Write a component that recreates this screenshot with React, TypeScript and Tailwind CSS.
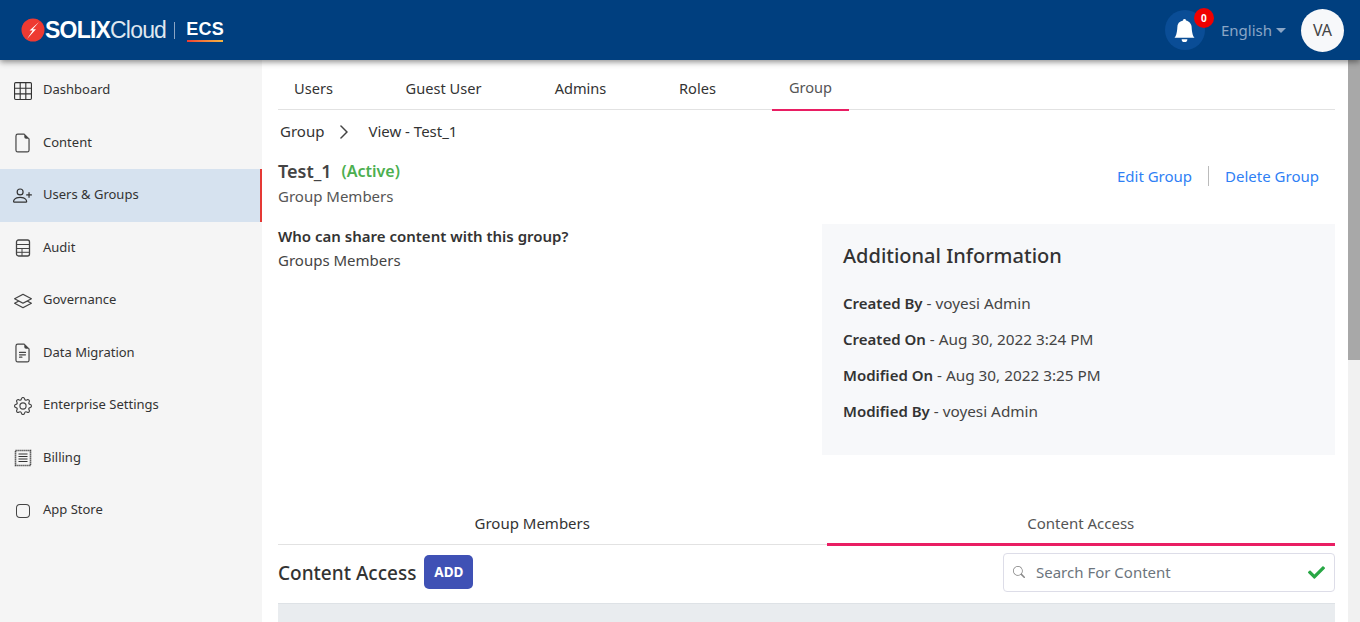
import { BsBellFill, BsChevronRight, BsSearch, BsFileEarmark, BsFileEarmarkText, BsGear, BsLayers, BsPersonPlus, BsGrid3X3, BsApp } from "react-icons/bs";
import { FaCheck } from "react-icons/fa";

const font = "font-['Noto_Sans',sans-serif]";

function AuditIcon() {
  return (
    <svg width="18" height="18" viewBox="0 0 18 18" fill="none" stroke="#444" strokeWidth="1">
      <rect x="2.5" y="1" width="13" height="16" rx="2" strokeWidth="1.3" />
      <path d="M2.5 5.5h13M2.5 9.5h13M2.5 13.3h13M8 9.5V17" />
    </svg>
  );
}

function BillingIcon() {
  return (
    <svg width="18" height="18" viewBox="0 0 18 18" fill="none" stroke="#333">
      <rect x="1.5" y="1.5" width="15" height="15" strokeWidth="1.6" strokeDasharray="1.2 0.8" />
      <path d="M4.5 5h9M4.5 7.5h9M4.5 10h9M4.5 12.5h9" strokeWidth="1.2" />
    </svg>
  );
}

const navItems = [
  { label: "Dashboard", icon: <BsGrid3X3 size={18} color="#333" /> },
  { label: "Content", icon: <BsFileEarmark size={20} color="#444" /> },
  { label: "Users & Groups", icon: <BsPersonPlus size={19} color="#333" />, active: true },
  { label: "Audit", icon: <AuditIcon /> },
  { label: "Governance", icon: <BsLayers size={18} color="#444" /> },
  { label: "Data Migration", icon: <BsFileEarmarkText size={20} color="#444" /> },
  { label: "Enterprise Settings", icon: <BsGear size={18} color="#444" /> },
  { label: "Billing", icon: <BillingIcon /> },
  { label: "App Store", icon: <BsApp size={16} color="#444" /> },
];

const tabs = [
  { label: "Users", w: "w-[71px]" },
  { label: "Guest User", w: "w-[109px]" },
  { label: "Admins", w: "w-[85px]" },
  { label: "Roles", w: "w-[69px]" },
  { label: "Group", w: "w-[77px]", active: true },
];

function Header() {
  return (
    <header className="relative z-10 flex h-[60px] shrink-0 items-center justify-between bg-[#003f7f] pl-[21px] pr-4 shadow-[0_2px_6px_rgba(0,0,0,0.45)]">
      <div className="flex items-center">
        <svg width="24" height="24" viewBox="0 0 24 24">
          <circle cx="12" cy="12" r="11.5" fill="#ee3a32" />
          <path d="M18 4 8.5 12.5h3.2L6 21l9-9.8h-3.2z" fill="#fff" />
        </svg>
        <span className="font-['Liberation_Sans',sans-serif] text-[23px] font-bold tracking-[-0.8px] text-white">SOLIX</span>
        <span className="font-['Liberation_Sans',sans-serif] text-[23px] tracking-[-0.8px] text-[#dfe7f0]">Cloud</span>
        <div className="mr-[11px] ml-[8px] h-[17px] w-px bg-[#8aa5c4]" />
        <div className="flex flex-col items-center">
          <span className="font-['Liberation_Sans',sans-serif] text-[18px] leading-[22px] font-bold tracking-[0.3px] text-white">ECS</span>
          <div className="h-[2px] w-9 bg-gradient-to-r from-[#ee3a32] to-[#f5b642]" />
        </div>
      </div>
      <div className="flex items-center">
        <div className="relative flex h-10 w-10 items-center justify-center rounded-full bg-[#0a4d96]">
          <BsBellFill size={23} color="#fff" />
          <span className="absolute -top-[2px] left-[29px] flex h-5 w-5 items-center justify-center rounded-full bg-[#f00000] text-[10px] font-bold text-white">0</span>
        </div>
        <span className="ml-[16px] text-[15px] text-[#8ba6c6]">English</span>
        <span className="mt-[1px] ml-[4px] h-0 w-0 border-x-[5px] border-t-[5px] border-x-transparent border-t-[#8ba6c6]" />
        <div className="ml-[15px] flex h-[43px] w-[43px] items-center justify-center rounded-full bg-[#f7f8fa] text-[16px] text-[#444]">VA</div>
      </div>
    </header>
  );
}

function Sidebar() {
  return (
    <aside className="flex w-[262px] shrink-0 flex-col bg-[#f5f5f5] pt-[4.4px]">
      {navItems.map((item) => (
        <div
          key={item.label}
          className={`flex h-[52.5px] items-center gap-[11px] pl-[13px] text-[13px] text-[#333] ${item.active ? "border-r-2 border-[#e53935] bg-[#d6e2ef]" : ""}`}
        >
          <span className="flex w-[19px] justify-center">{item.icon}</span>
          <span className="-mt-[1px]">{item.label}</span>
        </div>
      ))}
    </aside>
  );
}

function TopTabs() {
  return (
    <div className="flex h-[50px] gap-10 border-b border-[#e2e2e2]">
      {tabs.map((t) => (
        <div
          key={t.label}
          className={`${t.w} ${t.active ? "border-b-[2px] border-[#e91e63] text-[#555]" : "text-[#333]"} flex h-[51px] items-center justify-center pt-[6px] text-[14.6px]`}
        >
          {t.label}
        </div>
      ))}
    </div>
  );
}

function InfoRow({ label, value }: { label: string; value: string }) {
  return (
    <p className="text-[15.3px] leading-[20px] text-[#444]">
      <span className="text-[15px] font-semibold text-[#333]">{label}</span> - {value}
    </p>
  );
}

export default function App() {
  return (
    <div className={`flex h-screen flex-col overflow-hidden bg-white ${font}`}>
      <Header />
      <div className="flex min-h-0 flex-1">
        <Sidebar />
        <main className="min-w-0 flex-1 pr-[13px] pl-4">
          <TopTabs />
          <div className="flex h-[43px] items-center pl-[2px] text-[15px] text-[#333]">
            <span>Group</span>
            <BsChevronRight size={16} className="mr-[16px] ml-[12px] stroke-[0.5]" />
            <span>View - Test_1</span>
          </div>
          <div className="mt-[4px] flex items-start justify-between">
            <div>
              <div className="flex h-[28px] items-center">
                <span className="text-[18px] font-semibold text-[#444]">Test_1</span>
                <span className="ml-[10px] text-[16px] font-semibold text-[#4caf50]">(Active)</span>
              </div>
              <p className="text-[15px] leading-[22px] text-[#555]">Group Members</p>
            </div>
            <div className="mt-[8px] flex items-center pr-4 text-[15px] text-[#2f7ff5]">
              <span>Edit Group</span>
              <div className="mx-4 h-5 w-px bg-[#bbb]" />
              <span>Delete Group</span>
            </div>
          </div>
          <div className="mt-[17px] flex">
            <div className="w-[544px] text-[15px] leading-[24px]">
              <p className="font-semibold text-[#333]">Who can share content with this group?</p>
              <p className="text-[#444]">Groups Members</p>
            </div>
            <div className="flex h-[231px] flex-1 flex-col bg-[#f7f8fa] px-[21px] pt-[17px]">
              <h2 className="text-[20px] leading-[30px] font-medium text-[#333]">Additional Information</h2>
              <div className="mt-[22px] flex flex-col gap-4">
                <InfoRow label="Created By" value="voyesi Admin" />
                <InfoRow label="Created On" value="Aug 30, 2022 3:24 PM" />
                <InfoRow label="Modified On" value="Aug 30, 2022 3:25 PM" />
                <InfoRow label="Modified By" value="voyesi Admin" />
              </div>
            </div>
          </div>
          <div className="mt-[48px] grid h-[42px] grid-cols-2 gap-10 border-b border-[#e2e2e2] text-[15px]">
            <div className="flex items-center justify-center pb-[2px] text-[#333]">Group Members</div>
            <div className="flex h-[43px] items-center justify-center border-b-[3px] border-[#e91e63] text-[#555]">Content Access</div>
          </div>
          <div className="flex h-[58px] items-center justify-between">
            <div className="-mt-[2px] flex items-center">
              <h3 className="text-[19px] font-medium text-[#333]">Content Access</h3>
              <button className="-mt-[2px] ml-[8px] h-[34px] w-[49px] rounded-[5px] bg-[#3f51b5] text-[13.5px] font-bold text-white">ADD</button>
            </div>
            <div className="-mt-[4px] flex h-[39px] w-[332px] items-center rounded-[4px] border border-[#dddde8] pr-[9px] pl-[9px]">
              <BsSearch size={12} color="#888" />
              <span className="ml-[11px] flex-1 text-[15px] text-[#6c757d]">Search For Content</span>
              <FaCheck size={17} color="#28a745" />
            </div>
          </div>
          <div className="h-[40px] border-t border-[#dee2e6] bg-[#e9ecef]" />
        </main>
        <div className="w-3 shrink-0 bg-[#f1f1f1]">
          <div className="h-[300px] bg-[#a8a8a8]" />
        </div>
      </div>
    </div>
  );
}
